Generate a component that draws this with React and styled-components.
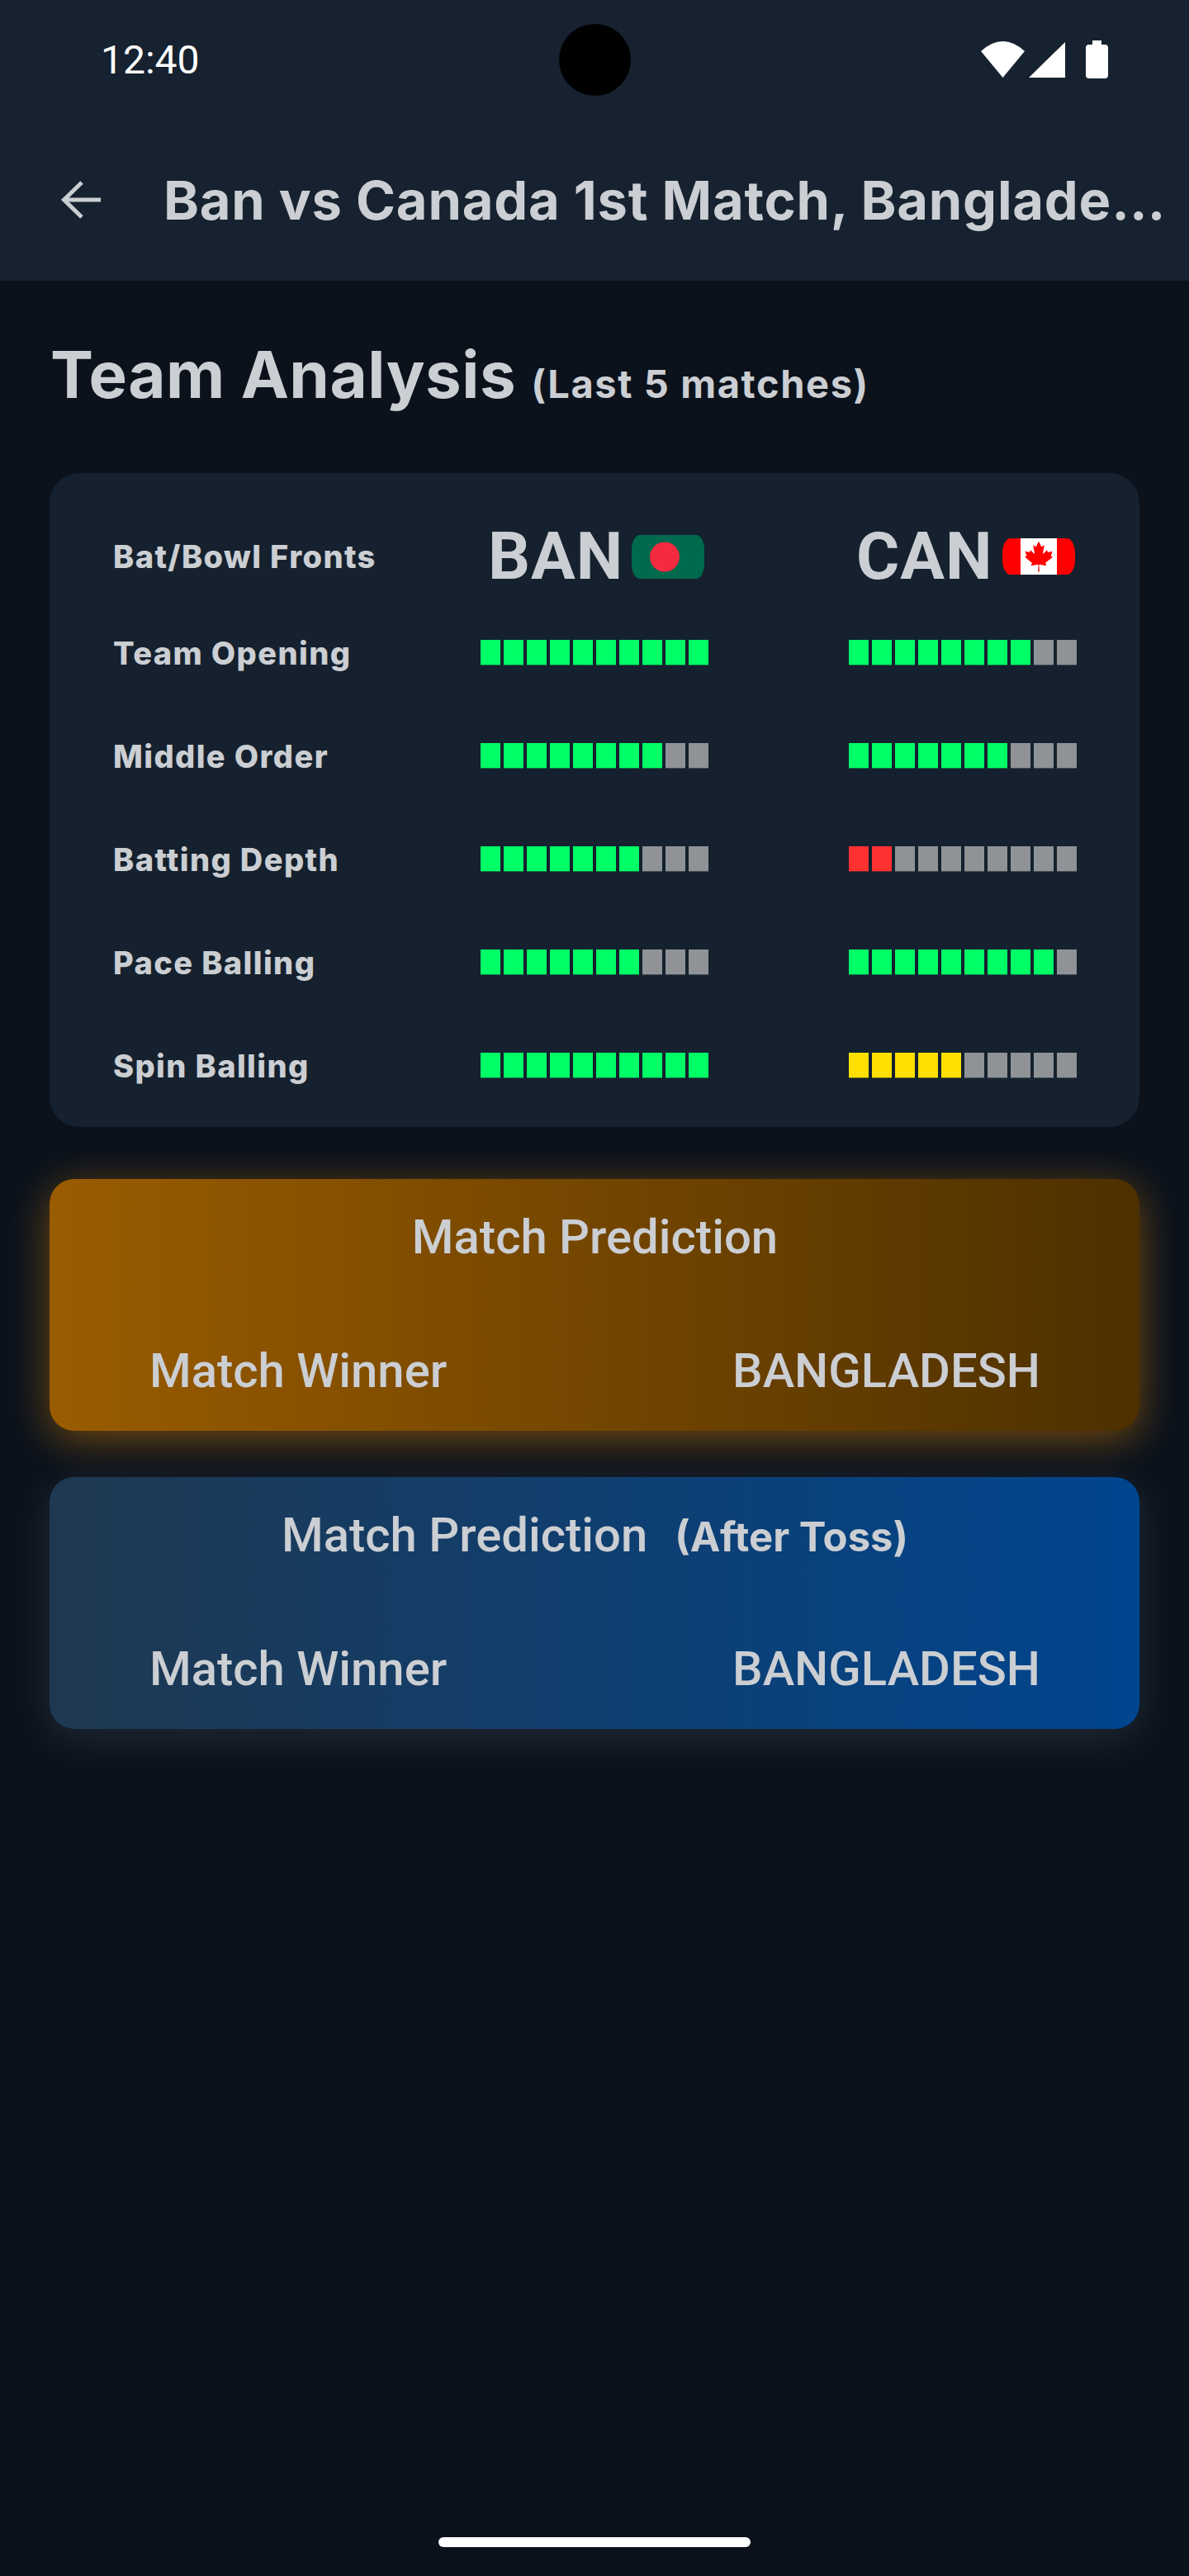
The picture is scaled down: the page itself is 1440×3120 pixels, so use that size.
import React from "react";
import styled, { createGlobalStyle } from "styled-components";

const GlobalStyle = createGlobalStyle`
    html, body {
        margin: 0;
        padding: 0;
        background-color: #0b121c;
    }
`;

const Screen = styled.div`
    position: relative;
    width: 1440px;
    height: 3120px;
    overflow: hidden;
    background-color: #0b121c;
    color: #cbced2;
    font-family: Roboto, sans-serif;
`;

const Header = styled.header`
    background-color: #16222f;
    height: 340px;
`;

const StatusBar = styled.div`
    position: relative;
    display: flex;
    align-items: center;
    justify-content: space-between;
    height: 144px;
    padding: 0 98px 0 122px;
`;

const Time = styled.span`
    color: #fff;
    font-size: 48px;
    font-weight: 400;
`;

const Camera = styled.div`
    position: absolute;
    left: 677px;
    top: 29px;
    width: 87px;
    height: 87px;
    border-radius: 50%;
    background-color: #000;
`;

const StatusIcons = styled.svg`
    display: block;
    width: 154px;
    height: 46px;
`;

const AppBar = styled.div`
    display: flex;
    align-items: center;
    height: 196px;
    box-sizing: border-box;
    padding-left: 72px;
    padding-right: 28px;
`;

const BackIcon = styled.svg`
    flex: none;
    width: 52px;
    height: 52px;
    margin-right: 74px;
`;

const Title = styled.h1`
    flex: 1;
    min-width: 0;
    margin: 0;
    font-family: Inter, sans-serif;
    font-size: 65px;
    font-weight: 700;
    letter-spacing: 0.8px;
    white-space: nowrap;
    overflow: hidden;
    text-overflow: ellipsis;
`;

const Main = styled.main`
    padding: 0 60px;
`;

const Heading = styled.div`
    display: flex;
    align-items: baseline;
    height: 233px;
    padding: 67px 0 0 1px;
    box-sizing: border-box;
    font-family: Inter, sans-serif;
    font-size: 78px;
    line-height: 94px;
    font-weight: 700;
    letter-spacing: 0.5px;
`;

const HeadingNote = styled.span`
    margin-left: 18px;
    font-size: 47px;
    font-weight: 700;
    letter-spacing: 1.6px;
`;

const AnalysisCard = styled.section`
    display: grid;
    grid-template-columns: 445px 446px 1fr;
    grid-template-rows: 108px repeat(5, 125px);
    height: 792px;
    box-sizing: border-box;
    padding: 47px 0 0 77px;
    border-radius: 36px;
    background-color: #15212e;
`;

const Label = styled.div`
    align-self: center;
    font-family: Inter, sans-serif;
    font-size: 38px;
    font-weight: 800;
    letter-spacing: 1.4px;
`;

const TeamHead = styled.div`
    display: flex;
    align-items: center;
    align-self: center;
    padding-left: 9px;
`;

const TeamCode = styled.span`
    font-size: 80px;
    font-weight: 700;
    line-height: 80px;
    letter-spacing: 1px;
    width: ${(p) => p.$w}px;
`;

const Flag = styled.svg`
    display: block;
    flex: none;
    width: 88px;
    height: ${(p) => p.$h}px;
    border-radius: 10px / 18px;
`;

const Meter = styled.div`
    display: flex;
    align-self: center;
    gap: 4px;
`;

const Segment = styled.div`
    width: 24px;
    height: 31px;
    background: linear-gradient(
        ${(p) => p.$color} 30px,
        color-mix(in srgb, ${(p) => p.$color} 35%, #15212e) 30px
    );
`;

const PredictionCard = styled.section`
    display: flex;
    flex-direction: column;
    height: 305px;
    margin-top: ${(p) => p.$top}px;
    box-sizing: border-box;
    padding: 40px 120px 0 121px;
    border-radius: 30px;
    background: ${(p) => p.$bg};
    box-shadow: ${(p) => p.$glow};
    font-size: 58px;
    font-weight: 500;
`;

const PredictionTitle = styled.div`
    display: flex;
    align-items: baseline;
    justify-content: center;
    gap: 33px;
    height: 60px;
    line-height: 60px;
`;

const TossNote = styled.span`
    font-family: Inter, sans-serif;
    font-size: 49px;
    font-weight: 700;
`;

const PredictionRow = styled.div`
    display: flex;
    justify-content: space-between;
    margin-top: 102px;
    line-height: 60px;
`;

const HomeBar = styled.div`
    position: absolute;
    left: 531px;
    top: 3073px;
    width: 378px;
    height: 12px;
    border-radius: 6px;
    background-color: #fff;
`;

const colors = {
    green: "#00ff66",
    red: "#ff3030",
    yellow: "#ffdf00",
    off: "#8f9396",
};

const rows = [
    { name: "Team Opening", ban: [10, "green"], can: [8, "green"] },
    { name: "Middle Order", ban: [8, "green"], can: [7, "green"] },
    { name: "Batting Depth", ban: [7, "green"], can: [2, "red"] },
    { name: "Pace Balling", ban: [7, "green"], can: [9, "green"] },
    { name: "Spin Balling", ban: [10, "green"], can: [5, "yellow"] },
];

const Bar = ({ value: [filled, color] }) => (
    <Meter>
        {Array.from({ length: 10 }, (_, i) => (
            <Segment key={i} $color={i < filled ? colors[color] : colors.off} />
        ))}
    </Meter>
);

const Prediction = ({ top, bg, glow, note }) => (
    <PredictionCard $top={top} $bg={bg} $glow={glow}>
        <PredictionTitle>
            <span>Match Prediction</span>
            {note && <TossNote>{note}</TossNote>}
        </PredictionTitle>
        <PredictionRow>
            <span>Match Winner</span>
            <span>BANGLADESH</span>
        </PredictionRow>
    </PredictionCard>
);

const App = () => (
    <Screen>
        <GlobalStyle />
        <Header>
            <StatusBar>
                <Time>12:40</Time>
                <Camera />
                <StatusIcons viewBox="1188 49 154 46">
                    <path fill="#fff" d="M1214.5 94 L1188 62 Q1214.5 38 1241 62 Z" />
                    <path fill="#fff" d="M1246 94 L1290 51 V94 Z" />
                    <path
                        fill="#fff"
                        d="M1323 49 H1334 V54 H1338 Q1342 54 1342 58 V91 Q1342 95 1338 95 H1319 Q1315 95 1315 91 V58 Q1315 54 1319 54 H1323 Z"
                    />
                </StatusIcons>
            </StatusBar>
            <AppBar>
                <BackIcon viewBox="0 0 52 52" fill="none" stroke="#cbced2" strokeWidth="5">
                    <path d="M50 26 H7" />
                    <path d="M27 5 L5.5 26 L27 47" />
                </BackIcon>
                <Title>Ban vs Canada 1st Match, Bangladesh vs Canada</Title>
            </AppBar>
        </Header>
        <Main>
            <Heading>
                Team Analysis
                <HeadingNote>(Last 5 matches)</HeadingNote>
            </Heading>
            <AnalysisCard>
                <Label>Bat/Bowl Fronts</Label>
                <TeamHead>
                    <TeamCode $w={174}>BAN</TeamCode>
                    <Flag $h={53} viewBox="0 0 88 53">
                        <rect width="88" height="53" fill="#006a4e" />
                        <circle cx="40" cy="26.5" r="18" fill="#f42a41" />
                    </Flag>
                </TeamHead>
                <TeamHead>
                    <TeamCode $w={177}>CAN</TeamCode>
                    <Flag $h={44} viewBox="0 0 9600 4800">
                        <rect width="9600" height="4800" fill="#f00" />
                        <path
                            fill="#fff"
                            fillRule="evenodd"
                            d="m2400 0h4800v4800h-4800zm2490 4430-45-863a95 95 0 0 1 111-98l859 151-116-320a65 65 0 0 1 20-73l941-762-212-99a65 65 0 0 1-34-79l186-572-542 115a65 65 0 0 1-73-38l-105-247-423 454a65 65 0 0 1-111-57l204-1052-327 189a65 65 0 0 1-91-27l-332-652-332 652a65 65 0 0 1-91 27l-327-189 204 1052a65 65 0 0 1-111 57l-423-454-105 247a65 65 0 0 1-73 38l-542-115 186 572a65 65 0 0 1-34 79l-212 99 941 762a65 65 0 0 1 20 73l-116 320 859-151a95 95 0 0 1 111 98l-45 863z"
                        />
                    </Flag>
                </TeamHead>
                {rows.map((row) => (
                    <React.Fragment key={row.name}>
                        <Label>{row.name}</Label>
                        <Bar value={row.ban} />
                        <Bar value={row.can} />
                    </React.Fragment>
                ))}
            </AnalysisCard>
            <Prediction
                top={63}
                bg="linear-gradient(90deg, #9a5c00, #4d3000)"
                glow="0 10px 50px rgba(255, 150, 0, 0.42)"
            />
            <Prediction
                top={56}
                bg="linear-gradient(90deg, #1f3850, #00458f)"
                glow="0 10px 50px rgba(200, 220, 255, 0.12)"
                note="(After Toss)"
            />
        </Main>
        <HomeBar />
    </Screen>
);

export default App;
